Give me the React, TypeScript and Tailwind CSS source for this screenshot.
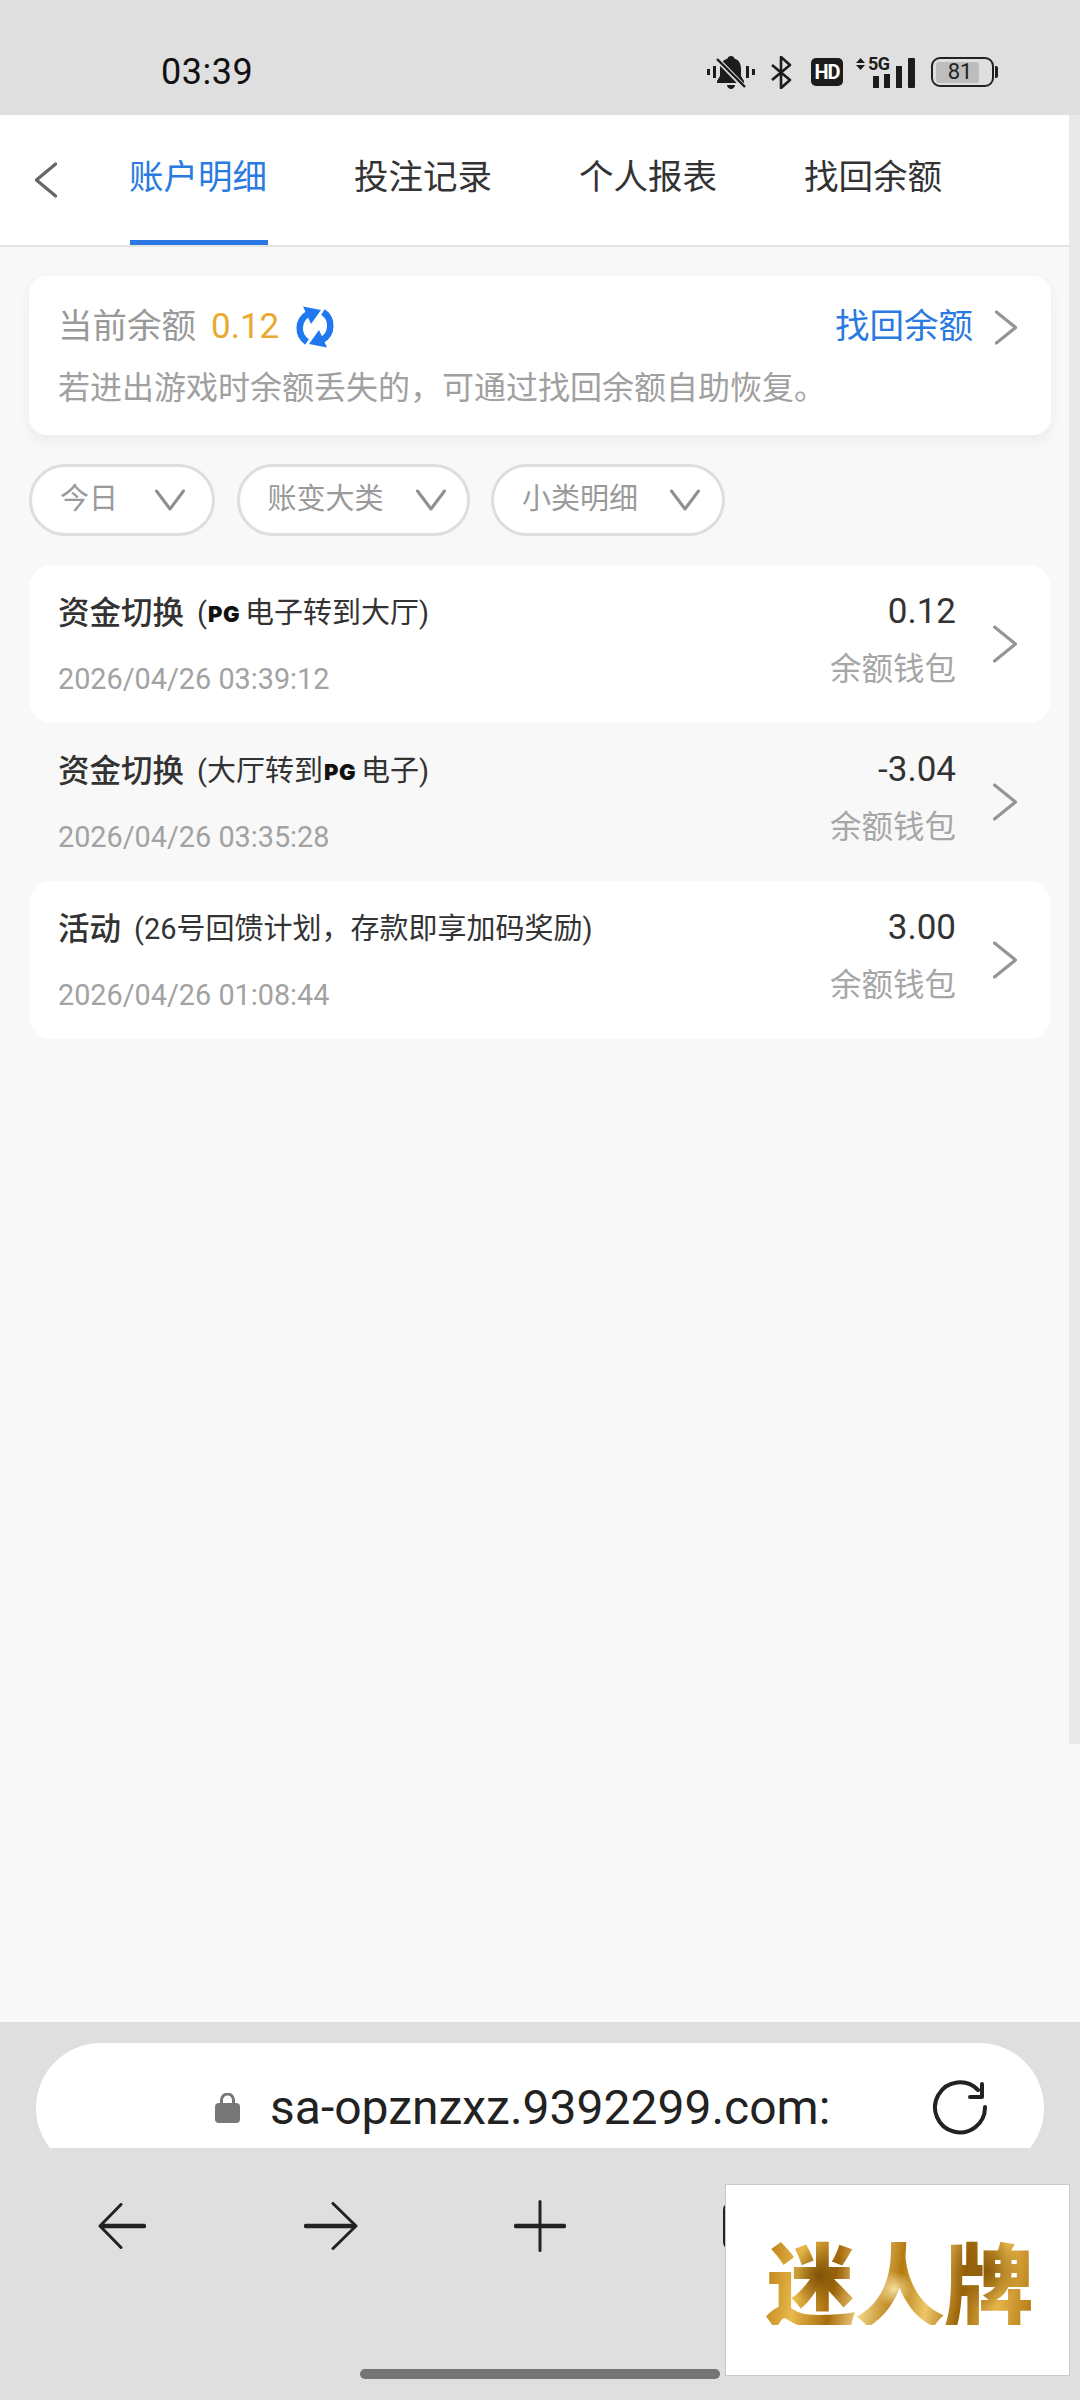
import { ReactNode } from "react";

const sans = "font-['Roboto','Noto_Sans_CJK_SC',sans-serif]";

function Chevron({ className }: { className: string }) {
  return (
    <svg viewBox="0 0 24 36" fill="none" className={className} preserveAspectRatio="none">
      <path d="M1.500 2 L22.500 18 L1.500 34" stroke="currentColor" strokeWidth="3.200" strokeLinecap="round" strokeLinejoin="round" vectorEffect="non-scaling-stroke" />
    </svg>
  );
}

function StatusIcons() {
  return (
    <div className="flex items-center">
      {/* muted bell */}
      <svg viewBox="0 0 48 33" className="w-[48px] h-[33px] text-[#1c1c1c]">
        <rect x="0" y="13" width="3" height="6" fill="currentColor" />
        <rect x="6" y="10" width="3" height="12" fill="currentColor" />
        <rect x="39" y="10" width="3" height="12" fill="currentColor" />
        <rect x="45" y="13" width="3" height="6" fill="currentColor" />
        <path d="M24 0c2 0 3 1 3.400 2.600C32 4 34 8 34 13v7l3 5v2H10v-2l3-5v-7c0-5 3-9 7.600-10.400C21 1 22 0 24 0z" fill="currentColor" />
        <path d="M20 29h8c0 2-2 4-4 4s-4-2-4-4z" fill="currentColor" />
        <path d="M10 3 L38 32" stroke="#dfdfdf" strokeWidth="5" />
        <path d="M10 3 L38 31" stroke="currentColor" strokeWidth="2.400" />
      </svg>
      {/* bluetooth */}
      <svg viewBox="0 0 21 33" fill="none" className="w-[21px] h-[33px] ml-[16px]">
        <path d="M1 9 L19 24 L10 32 V1 L19 9 L1 24" stroke="#1c1c1c" strokeWidth="2.600" strokeLinejoin="round" />
      </svg>
      <div className={`ml-[19px] w-[32px] h-[28px] rounded-[5px] bg-[#1c1c1c] flex items-center justify-center text-white text-[20px] font-bold tracking-[-1px] ${sans}`}>
        HD
      </div>
      {/* signal with 5G */}
      <div className="relative ml-[12px] w-[60px] h-[33px]">
        <svg viewBox="0 0 60 33" className="w-[60px] h-[33px] text-[#1c1c1c]">
          <path d="M1 7 L5.500 2 L10 7z M1 9 L5.500 14 L10 9z" fill="currentColor" />
          <rect x="18" y="20" width="6" height="12" fill="currentColor" />
          <rect x="29" y="18" width="6" height="14" fill="currentColor" />
          <rect x="41" y="10" width="6" height="22" fill="currentColor" />
          <rect x="53" y="2" width="7" height="30" rx="1" fill="currentColor" />
        </svg>
        <span className="absolute left-[13px] top-[-1px] text-[18px] leading-[18px] font-bold text-[#1c1c1c] tracking-[-0.5px]">5G</span>
      </div>
      {/* battery */}
      <div className="ml-[16px] flex items-center">
        <div className="w-[63px] h-[30px] rounded-[9px] border-[2.500px] border-[#222] p-[2.500px]">
          <div className={`w-[43px] h-full rounded-[3px] bg-[#bdbdbd] text-[#222] text-[22px] leading-[20px] text-center pl-[6px] ${sans}`}>
            81
          </div>
        </div>
        <div className="w-[3px] h-[12px] ml-[1px] rounded-r-[2px] bg-[#222]" />
      </div>
    </div>
  );
}

function RefreshIcon() {
  return (
    <svg viewBox="0 0 40 42" fill="none" className="w-[40px] h-[42px] ml-[16px]">
      <path d="M13 8 A16.500 16.500 0 0 0 12 36" stroke="#1f78f0" strokeWidth="6.500" />
      <path d="M8 0.500 L26 4 L16 18z" fill="#1f78f0" />
      <path d="M27 34 A16.500 16.500 0 0 0 28 6" stroke="#1f78f0" strokeWidth="6.500" />
      <path d="M32 41.500 L14 38 L24 24z" fill="#1f78f0" />
    </svg>
  );
}

function Select({ label, w, gap }: { label: string; w: string; gap: string }) {
  return (
    <div className={`${w} h-[72px] rounded-full border-[3px] border-[#dedede] bg-white flex items-center pl-[28px] text-[#9a9a9a] text-[29px]`}>
      <span>{label}</span>
      <svg viewBox="0 0 30 22" fill="none" className={`w-[30px] h-[22px] ${gap}`}>
        <path d="M1.500 2 L15 20 L28.500 2" stroke="#8f8f8f" strokeWidth="3" strokeLinecap="round" strokeLinejoin="round" />
      </svg>
    </div>
  );
}

function PG() {
  return <span className="inline-block w-[36px] mx-[1px] text-[22px] font-black tracking-[0.5px] text-[#111] font-['Inter',sans-serif]">PG</span>;
}

function Row({ title, sub, date, amount, white }: { title: string; sub: ReactNode; date: string; amount: string; white?: boolean }) {
  return (
    <div className={`h-[158px] rounded-[22px] pl-[29px] pr-[34px] flex ${white ? "bg-white" : ""}`}>
      <div className="flex-1 pt-[29px]">
        <div className="h-[40px] flex items-center">
          <span className="text-[31.500px] font-medium text-[#333]">{title}</span>
          <span className="ml-[13px] text-[29px] text-[#333] flex items-center">{sub}</span>
        </div>
        <div className="mt-[25px] h-[40px] leading-[40px] text-[28.800px] text-[#a2a2a2]">{date}</div>
      </div>
      <div className="pt-[27px] text-right">
        <div className="h-[40px] leading-[40px] text-[35px] text-[#333]">{amount}</div>
        <div className="mt-[18px] h-[40px] leading-[40px] text-[31.500px] text-[#a6a6a6]">余额钱包</div>
      </div>
      <div className="ml-[37px] flex items-center">
        <Chevron className="w-[24px] h-[38px] text-[#959595]" />
      </div>
    </div>
  );
}

export default function App() {
  const tabs = ["账户明细", "投注记录", "个人报表", "找回余额"];

  return (
    <div className={`relative w-[1080px] h-[2400px] bg-[#dfdfdf] flex flex-col overflow-hidden ${sans}`}>
      {/* Status bar */}
      <div className="h-[115px] pt-[29px] pl-[161px] pr-[82px] flex items-center justify-between shrink-0">
        <span className="text-[36px] text-[#111] tracking-[0.5px]">03:39</span>
        <StatusIcons />
      </div>

      {/* Page + scrollbar */}
      <div className="flex-1 flex min-h-0">
        <div className="flex-1 flex flex-col bg-[#f8f8f8]">
          <div className="h-[132px] shrink-0 bg-white border-b-[2px] border-[#e3e3e3] flex items-stretch">
            <div className="w-[130px] pl-[35px] flex items-center">
              <Chevron className="w-[22px] h-[36px] text-[#666] rotate-180" />
            </div>
            <div className="flex gap-[87px]">
              {tabs.map((tab, i) => (
                <div key={tab} className={`w-[138px] flex items-center justify-center pr-[2px] text-[34.500px] whitespace-nowrap border-b-[5px] ${i === 0 ? "text-[#2a7ae2] border-[#2a78e4]" : "text-[#333] border-transparent"}`}>
                  {tab}
                </div>
              ))}
            </div>
          </div>

          <div className="px-[29px] pr-[18px] pt-[29px]">
            {/* Balance */}
            <div className="h-[159px] rounded-[18px] bg-white shadow-[0_6px_14px_rgba(0,0,0,0.05)] pl-[29px] pr-[34px] pt-[30px]">
              <div className="h-[42px] flex items-center">
                <span className="text-[34.500px] text-[#999]">当前余额</span>
                <span className="ml-[15px] text-[35px] text-[#e9a92f]">0.12</span>
                <RefreshIcon />
                <span className="ml-auto text-[34.500px] text-[#2a7ae2]">找回余额</span>
                <Chevron className="ml-[22px] w-[22px] h-[35px] text-[#959595]" />
              </div>
              <div className="mt-[20px] h-[40px] leading-[40px] text-[32px] text-[#a0a0a0] whitespace-nowrap">
                若进出游戏时余额丢失的，可通过找回余额自助恢复。
              </div>
            </div>

            {/* Filters */}
            <div className="mt-[29px] flex gap-[21.500px]">
              <Select label="今日" w="w-[186px]" gap="ml-[37px]" />
              <Select label="账变大类" w="w-[233px]" gap="ml-[32px]" />
              <Select label="小类明细" w="w-[234px]" gap="ml-[32px]" />
            </div>

            {/* Records */}
            <div className="mt-[29px] flex flex-col">
              <Row white title="资金切换" date="2026/04/26 03:39:12" amount="0.12" sub={<>(<PG />电子转到大厅)</>} />
              <Row title="资金切换" date="2026/04/26 03:35:28" amount="-3.04" sub={<>(大厅转到<PG />电子)</>} />
              <Row white title="活动" date="2026/04/26 01:08:44" amount="3.00" sub={<>(26号回馈计划，存款即享加码奖励)</>} />
            </div>
          </div>
        </div>

        {/* Scrollbar */}
        <div className="w-[11px] bg-[#f8f8f8]">
          <div className="h-[1629px] bg-[#e9e9e9]" />
        </div>
      </div>

      {/* Browser bar */}
      <div className="h-[378px] shrink-0 flex flex-col">
        <div className="mt-[21px] mx-[36px] h-[105px] overflow-hidden">
          <div className="h-[130px] rounded-full bg-white flex items-center pl-[179px] pr-[56px]">
            <svg viewBox="0 0 25 30" className="w-[25px] h-[30px]">
              <path d="M6.500 11V7a6 6 0 0 1 12 0v4" fill="none" stroke="#777" strokeWidth="3" />
              <rect x="0" y="10" width="25" height="20" rx="4" fill="#777" />
            </svg>
            <span className="ml-[30px] text-[48px] text-[#222]">sa-opznzxz.9392299.com:</span>
            <svg viewBox="0 0 56 56" fill="none" className="ml-auto w-[56px] h-[56px]">
              <path d="M46 10 A25 25 0 1 0 53 27" stroke="#222" strokeWidth="4" strokeLinecap="round" />
              <path d="M38 17 H50 V4" stroke="#222" strokeWidth="4" strokeLinecap="round" strokeLinejoin="round" />
            </svg>
          </div>
        </div>

        <div className="mt-[52px] px-[17px] grid grid-cols-5 text-[#222]">
          <div className="h-[52px] flex items-center justify-center">
            <svg viewBox="0 0 48 46" fill="none" className="w-[48px] h-[46px]">
              <path d="M23 1.500 L2 23 L23 44.500" stroke="currentColor" strokeWidth="3" strokeLinecap="round" strokeLinejoin="round" />
              <path d="M4 23 H46" stroke="currentColor" strokeWidth="4.500" strokeLinecap="round" />
            </svg>
          </div>
          <div className="h-[52px] flex items-center justify-center">
            <svg viewBox="0 0 54 48" fill="none" className="w-[54px] h-[48px]">
              <path d="M29 1.500 L52 24 L29 46.500" stroke="currentColor" strokeWidth="3" strokeLinecap="round" strokeLinejoin="round" />
              <path d="M2 24 H50" stroke="currentColor" strokeWidth="4.500" strokeLinecap="round" />
            </svg>
          </div>
          <div className="h-[52px] flex items-center justify-center">
            <svg viewBox="0 0 52 52" fill="none" className="w-[52px] h-[52px]">
              <path d="M26 1.500 V50.500" stroke="currentColor" strokeWidth="3" strokeLinecap="round" />
              <path d="M2 26 H50" stroke="currentColor" strokeWidth="4.500" strokeLinecap="round" />
            </svg>
          </div>
          <div className="h-[52px] flex items-center justify-center">
            <div className="w-[52px] h-[48px] rounded-[8px] border-[3px] border-[#222]" />
          </div>
        </div>

        <div className="mt-auto mb-[21px] mx-auto w-[360px] h-[10px] rounded-full bg-[#757575]" />
      </div>

      {/* Floating ad */}
      <div className="absolute left-[725px] top-[2184px] w-[345px] h-[192px] bg-white border border-[#c9c9c9] flex items-center justify-center">
        <span className="text-[90px] leading-none font-black tracking-[-1px] ml-[4px] text-transparent bg-clip-text bg-[radial-gradient(circle_at_20%_45%,#7f5206_0%,transparent_14%),radial-gradient(circle_at_48%_60%,#f6e2a0_0%,transparent_12%),radial-gradient(circle_at_82%_40%,#8a5a08_0%,transparent_16%),linear-gradient(100deg,#b87a12_0%,#e8b94a_14%,#a86c0c_27%,#f0d484_38%,#b5790f_50%,#eec768_61%,#9c6408_73%,#e6b54a_86%,#b07510_100%)] font-['Noto_Sans_CJK_SC',sans-serif]">
          迷人牌
        </span>
      </div>
    </div>
  );
}
